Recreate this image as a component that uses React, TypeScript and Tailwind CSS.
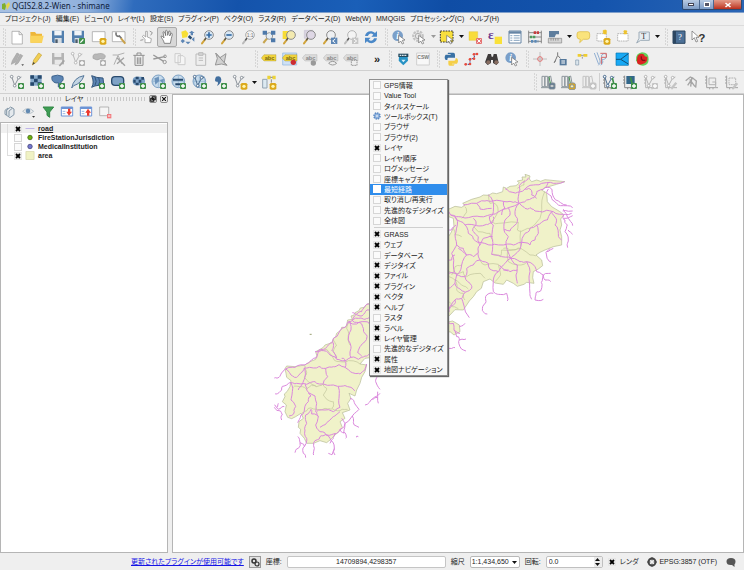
import { type ReactNode } from "react";

const GREEN = "#3f8f4a";
const BLUE = "#5d86b5";
const NAVY = "#27496d";
const GREY = "#a3a3a3";

/* ---------- small pieces shared by the toolbar drawings ---------- */

const Badge = ({ fill = GREEN, children }: { fill?: string; children?: ReactNode }) => (
  <g>
    <rect x="27" y="27" width="18" height="18" rx="3" fill={fill} />
    {children ?? <path d="M36 30v12M30 36h12" stroke="#fff" strokeWidth="4" />}
  </g>
);
const Sun = () => (
  <g>
    <path d="M29 27h14l3 4v12l-3 4H29l-3-4V31z" fill="#dca91c" />
    <circle cx="36" cy="37" r="5" fill="#fff6b0" />
  </g>
);
const Lens = ({ fill = "#d9e8f5", ring = "#8b8b8b", handle = "#d2a43a", children }: { fill?: string; ring?: string; handle?: string; children?: ReactNode }) => (
  <g>
    <path d="M16 30L6 43" stroke={handle} strokeWidth="6" strokeLinecap="round" />
    <path d="M18 27l-5 7" stroke="#555" strokeWidth="4" />
    <circle cx="27" cy="18" r="13" fill={fill} stroke={ring} strokeWidth="3" />
    {children}
  </g>
);
const Nodes = ({ c = "#8a9199" }: { c?: string }) => (
  <g fill="#fff" stroke={c} strokeWidth="3">
    <path d="M8 8l9 26L29 12l8-3" fill="none" />
    <circle cx="8" cy="8" r="4" />
    <circle cx="17" cy="35" r="4" />
    <circle cx="29" cy="11" r="4" />
  </g>
);
const Label = ({ c = "#f1d43e", t = "#7a6a10", children }: { c?: string; t?: string; children?: ReactNode }) => (
  <g>
    <path d="M1 21l8-10h36v19H9z" fill={c} stroke={t} strokeOpacity=".4" strokeWidth="2" />
    <text x="11" y="26" fontSize="17" fontWeight="bold" fontFamily="Liberation Sans, sans-serif" fill={t}>abc</text>
    {children}
  </g>
);
const Globe = ({ children }: { children?: ReactNode }) => (
  <g>
    <circle cx="22" cy="22" r="19" fill="#c7dbec" stroke="#7ea1c4" strokeWidth="3" />
    <path d="M22 3v38M3 22h38M10 7c-7 12-5 24 1 31M34 7c7 12 5 24-1 31" fill="none" stroke="#8eb0d0" strokeWidth="2" />
    {children}
  </g>
);
const Books = ({ c = "#8d969c", children }: { c?: string; children?: ReactNode }) => (
  <g fill="#eee" stroke={c} strokeWidth="3">
    <path d="M6 7h8v31H6zM15 7h8v31h-8z" />
    <path d="M25 9l7-3 6 32H26zM3 41h25" />
    {children}
  </g>
);

const icons: Record<string, ReactNode> = {
  "New project": <path d="M9 7h22l9 9v29H9zM30 7v10h10" fill="#fff" stroke="#979797" strokeWidth="2" />,
  "Open project": <><path d="M4 9h14l4 5h17v27H5z" fill="#eeb73a" /><path d="M4 41V20h40l-5 21z" fill="#fad45c" /></>,
  "Save project": <Floppy />,
  "Save project as": <Floppy><Badge><path d="M31 41l9-10" stroke="#fff" strokeWidth="4" /></Badge></Floppy>,
  "New composer": <><path d="M4 8h38v30H4z" fill="#fff" stroke="#999" strokeWidth="2" /><Sun /></>,
  "Composer manager": <><path d="M4 8h38v30H4z" fill="#fff" stroke="#999" strokeWidth="2" /><path d="M16 10c-4 8 2 14 9 11l7 8" fill="none" stroke="#777" strokeWidth="5" /><path d="M30 28l13 16" stroke="#c9a14a" strokeWidth="6" /></>,
  "Touch zoom": <><path d="M18 41V31l-8-9 4-3 6 5V7h5v17l12 5-2 12z" fill="#fff" stroke="#888" strokeWidth="2" /><path d="M32 6l8 5-5 8M4 34l9-2" fill="none" stroke="#999" strokeWidth="3" /></>,
  "Pan map": <path d="M16 43c-2-10-9-16-10-21 4-3 7 3 9 5L12 9c4-3 6 2 8 11V5c4-3 6 1 6 14l4-13c5-1 4 4 2 15l5-9c5 1 2 8 0 16l-3 15z" fill="#fff" stroke="#555" strokeWidth="2" />,
  "Pan to selection": <><path d="M4 8l13-4 8 9-4 12-14 2z" fill="#f8df36" /><path d="M35 5l-8 7h5v7h7v-7h5zM8 30l7 6-7 7-6-7zM43 24v14l-8-7zM24 46l-8-8h16z" fill={BLUE} /><path d="M26 21l8 8" stroke={NAVY} strokeWidth="8" /></>,
  "Zoom in": <Lens><path d="M27 10v16M19 18h16" stroke="#356ba3" strokeWidth="5" /></Lens>,
  "Zoom out": <Lens><path d="M19 18h16" stroke="#356ba3" strokeWidth="5" /></Lens>,
  "Zoom native": <Lens fill="#f2f2f2" ring="#aaa" handle="#bbb"><text x="17" y="24" fontSize="15" fontFamily="Liberation Sans, sans-serif" fill="#777">1:1</text></Lens>,
  "Zoom full": <><path d="M7 42L20 26" stroke="#c7a550" strokeWidth="6" /><circle cx="25" cy="21" r="10" fill="#e3edf5" stroke="#999" strokeWidth="3" /><path d="M5 5h13v12H5zM30 5h13v12H30zM30 28h13v12H30z" fill="#4d79aa" /></>,
  "Zoom to selection": <><path d="M2 6h26v24H2z" fill="#f7dc35" /><Lens fill="#f3eab0" /></>,
  "Zoom to layer": <><path d="M7 4h26v24H7z" fill="#d7d2df" stroke="#b6adc1" /><Lens fill="#ded7e5" /></>,
  "Zoom last": <><Lens fill="#eef0f2" /><path d="M27 26h19v19H27z" fill={BLUE} /><path d="M40 30l-8 6 8 6" stroke="#fff" strokeWidth="3" fill="none" /></>,
  "Zoom next": <><Lens fill="#f4f4f4" ring="#b5b5b5" handle="#bbb" /><path d="M27 26h19v19H27z" fill="#c6c6c6" /><path d="M33 30l8 6-8 6" stroke="#fff" strokeWidth="3" fill="none" /></>,
  "Refresh": <path d="M6 21C8 6 26 2 36 12l6-6v17H25l6-6c-6-6-14-3-16 4zM42 28C40 43 22 47 12 37l-6 6V26h17l-6 6c6 6 14 3 16-4z" fill="#4a88c8" />,
  "Identify": <><circle cx="20" cy="20" r="16" fill="#7a9fc9" /><text x="16" y="30" fontSize="28" fontStyle="italic" fontWeight="bold" fontFamily="Liberation Serif, serif" fill="#fff">i</text><Arrow /></>,
  "Run feature action": <><circle cx="21" cy="21" r="14" fill="none" stroke="#c2c2c2" strokeWidth="7" strokeDasharray="7 3" /><circle cx="21" cy="21" r="8" fill="#e6e6e6" stroke="#b0b0b0" strokeWidth="3" /><Arrow /></>,
  "Select features": <><path d="M4 6h38v33H4z" fill="#f8df3d" stroke="#333" strokeWidth="3" strokeDasharray="5 3" /><Arrow /></>,
  "Deselect all": <><path d="M6 8h26v26H6z" fill="#f8dc3c" stroke="#d9bd2a" /><Badge fill="#e57373"><path d="M31 31l10 10M41 31L31 41" stroke="#fff" strokeWidth="3" /></Badge></>,
  "Select by expression": <><text x="3" y="30" fontSize="40" fontWeight="bold" fontFamily="Liberation Serif, serif" fill="#6b3c91">ε</text><path d="M23 23h22v22H23z" fill="#f9e13a" /></>,
  "Attribute table": <><path d="M6 6h36v36H6z" fill="#fff" stroke="#6685a5" strokeWidth="3" /><path d="M6 7h36v7H6z" fill="#6685a5" /><path d="M10 20h6M10 27h6M10 34h6M20 20h18M20 27h18M20 34h18" stroke="#87a4c0" strokeWidth="3" /></>,
  "Field calculator": <><path d="M5 5v38M43 5v38M4 11h40M4 24h40M4 37h40" stroke="#8a8a8a" strokeWidth="3" /><path d="M20 11h18" stroke="#c33d3d" strokeWidth="8" strokeDasharray="7 2" /><path d="M9 24h18" stroke="#4e9a5c" strokeWidth="8" strokeDasharray="7 2" /><path d="M12 37h22" stroke="#5a89b8" strokeWidth="8" strokeDasharray="7 3" /></>,
  "Measure": <><path d="M6 6h30v10h-9l-4 9H6z" fill="#5d7d9d" /><path d="M4 28h40v14H4z" fill="#d5d5d5" stroke="#888" strokeWidth="2" /><path d="M12 28v7M19 28v7M26 28v7M33 28v7" stroke="#777" strokeWidth="2" /></>,
  "Map tips": <path d="M14 8h24q6 0 6 7v9q0 7-7 7H25L14 41l2-10q-10-1-10-8v-8q0-7 8-7z" fill="#fae37c" stroke="#d9b73b" strokeWidth="2" />,
  "New bookmark": <><path d="M6 14h28v22H6z" fill="#fff" stroke="#999" strokeWidth="2" strokeDasharray="5 2" /><path d="M25 4l9 10M34 4l-9 10" stroke="#edc22e" strokeWidth="7" /><Sun /></>,
  "Show bookmarks": <><path d="M8 14h31v22H8z" fill="#fff" stroke="#999" strokeWidth="2" strokeDasharray="5 2" /><path d="M27 5l8 10M35 5l-8 10" stroke="#edc22e" strokeWidth="6" /></>,
  "Text annotation": <><path d="M12 9h31v25H17L5 42l7-14z" fill="#e6edf3" stroke="#9eacb8" strokeWidth="3" /><text x="19" y="30" fontSize="24" fontFamily="Liberation Serif, serif" fill="#333">T</text></>,
  "Help contents": <><path d="M6 6h36v37H6z" fill="#4c7097" stroke="#2c4661" strokeWidth="3" /><path d="M6 6h9v37H6z" fill="#2c4661" /><text x="21" y="33" fontSize="26" fontFamily="Liberation Serif, serif" fill="#fff">?</text></>,
  "What's this": <><path d="M3 6v27l7-7 5 13 5-2-5-12h9z" fill="#fff" stroke="#666" strokeWidth="2" /><text x="22" y="38" fontSize="35" fontWeight="bold" fontFamily="Liberation Sans, sans-serif" fill="#333">?</text></>,

  "Current edits": <><path d="M7 40l3-11L24 6l7 4-13 24zM18 42l3-10L34 10l7 4-14 23z" fill="#b0b0b0" stroke="#a0a0a0" strokeWidth="2" /><path d="M37 40h8l-4 5z" fill="#555" /></>,
  "Toggle editing": <><path d="M10 42l4-15L29 6l9 6-15 21z" fill="#f1cf53" stroke="#c4a23c" strokeWidth="2" /><path d="M10 42l3-9 5 4z" fill="#444" /></>,
  "Save layer edits": <><path d="M6 6h36v34H6z" fill="#b4b4b4" /><path d="M13 6h21v12H13zM14 26h22v14H14z" fill="#e9e9e9" /><path d="M28 45l15-17" stroke="#a5a5a5" strokeWidth="5" /></>,
  "Add feature": <><Nodes c="#b8b8b8" /><Badge fill="#b2b2b2" /></>,
  "Move feature": <><path d="M6 22Q4 7 18 9q17-5 25 5-1 15-15 9-9 8-22-1z" fill="#b8b8b8" stroke="#a0a0a0" strokeWidth="2" /><Badge fill="#b2b2b2" /></>,
  "Node tool": <><path d="M5 12h15M9 41l12-28 12 26M20 12l20-6" fill="none" stroke="#b0b0b0" strokeWidth="3" /><path d="M18 20l24 24M39 20L18 38" stroke="#a0a0a0" strokeWidth="4" /></>,
  "Delete selected": <path d="M7 13h34M18 12V6h12v6M12 14v29h24V14M19 19v20M24 19v20M29 19v20" fill="none" stroke="#8e8e8e" strokeWidth="3" />,
  "Cut": <><path d="M4 12l31 19M4 24l34-7" stroke="#999" strokeWidth="4" /><circle cx="38" cy="33" r="5" fill="none" stroke="#999" strokeWidth="3" /><circle cx="39" cy="16" r="4" fill="none" stroke="#999" strokeWidth="3" /></>,
  "Copy": <path d="M9 8h16v27H9zM18 14h15l6 6v21H18z" fill="#f5f5f5" stroke="#ccc" strokeWidth="3" />,
  "Paste": <path d="M9 9h29v34H9zM17 5h13v8H17zM17 21h13M17 28h13" fill="#eee" stroke="#bbb" strokeWidth="3" />,
  "Digitize shape": <path d="M8 6l13 14L39 8l-5 26 8 9-16-4L7 42l6-20zM10 8l30 34" fill="#d2d2d2" stroke="#979797" strokeWidth="3" />,
  "Label settings": <Label />,
  "Pin labels": <><path d="M2 6h42v36H2z" fill="#cfe1f5" stroke="#8bb3df" strokeWidth="2" /><Label><circle cx="34" cy="34" r="8" fill="#cd2c30" /></Label></>,
  "Show labels": <Label c="#dcdcdc" t="#888"><circle cx="34" cy="36" r="8" fill="#999" /></Label>,
  "Move label": <Label c="#dcdcdc" t="#888"><path d="M17 37q12-12 24 0-12 10-24 0z" fill="#eee" stroke="#999" strokeWidth="3" /></Label>,
  "Change label": <Label c="#dcdcdc" t="#888"><path d="M25 28h17v15H25z" fill="#eee" stroke="#999" strokeWidth="3" strokeDasharray="5 2" /></Label>,
  "Catalog": <><path d="M12 17h26l1 12-14 14-14-14z" fill="#2792c4" /><path d="M10 8h30v10H10z" fill="#24485c" /><path d="M14 13h22" stroke="#dbe7ed" strokeWidth="4" strokeDasharray="5 2" /><path d="M19 26l6 8 7-8z" fill="#d9eff8" /></>,
  "Catalog service": <><path d="M5 6h38v36H5z" fill="#f8f8f8" stroke="#d0d0d0" strokeWidth="3" /><text x="7" y="25" fontSize="15" fontWeight="bold" fontFamily="Liberation Sans, sans-serif" fill="#777">CSW</text></>,
  "Python console": <><path d="M15 5h16q5 0 5 6v9H16q-3 0-3 7h-5q-6-8 0-16h15V9h-9z" fill="#3971a5" /><path d="M32 44H20q-4 0-4-6v-9h18q4 0 4-7h4q6 8 0 16H27v2h8z" fill="#f5cf48" /></>,
  "Shortest path": <><path d="M8 40h13V23h13V9h9" fill="none" stroke="#2c3f99" strokeWidth="3" strokeDasharray="4 2" /><g fill="#e84b3c"><circle cx="8" cy="40" r="4" /><circle cx="21" cy="39" r="4" /><circle cx="21" cy="25" r="4" /><circle cx="33" cy="23" r="4" /><circle cx="33" cy="10" r="4" /><circle cx="42" cy="9" r="4" /></g></>,
  "Search": <><path d="M12 9h9l2 8h4l2-8h9l6 26-7 7-10-6v-9h-6v9l-10 6-8-8z" fill="#3e3b3b" /><circle cx="13" cy="34" r="6" fill="#876d61" /><circle cx="37" cy="34" r="6" fill="#876d61" /></>,
  "Coordinate capture": <><path d="M24 3v42M3 24h42" stroke="#aaa" strokeWidth="2" /><circle cx="24" cy="24" r="7" fill="none" stroke="#e07070" strokeWidth="3" /></>,
  "Evaluate": <><path d="M8 33l9-20 8 9M17 12V4M6 36l5-8" stroke="#777" strokeWidth="3" fill="none" /><path d="M23 24h21v19H23z" fill="#55789b" /><path d="M28 30h11M28 36h11" stroke="#fff" strokeWidth="3" /></>,
  "GPS tools": <><path d="M14 9h11v8H14zM31 9h12v8H31z" fill="#efcd30" /><path d="M24 13h8M28 17v6" stroke="#999" strokeWidth="3" /><path d="M8 27h9v15H8z" fill="#dce6ed" stroke="#8399ac" strokeWidth="2" /></>,
  "Topology": <><path d="M4 6l13 34M12 4c8 23 14 30 4 39M26 42V12q12-10 15 3-2 13-17 10 12 7-1 17" fill="none" stroke="#91afd2" strokeWidth="3" /><path d="M22 7h18v12H25v20" fill="none" stroke="#d66969" strokeWidth="3" /></>,
  "Road graph": <><path d="M6 6h37v37H6z" fill="#17a9f5" stroke="#0876b0" strokeWidth="2" /><path d="M6 25h14L43 8M20 25l23 14" stroke="#105078" strokeWidth="3" fill="none" /></>,
  "Heatmap": <><path d="M24 4q20 0 20 20 0 18-16 20-16 1-22-16Q4 7 24 4z" fill="#65cf5a" /><path d="M22 8q10 0 10 8l8 2q2 18-16 22T9 24q0-15 13-16z" fill="#dc2222" /><path d="M22 16q-2 14 12 12" fill="none" stroke="#801414" strokeWidth="4" /></>,

  "Add vector layer": <><Nodes /><Badge /></>,
  "Add raster layer": <><path d="M4 4h34v31H4z" fill="#86aacb" /><path d="M4 4h11v10H4zM26 4h12v10H26zM15 14h11v11H15zM4 25h11v10H4zM26 25h12v10H26z" fill={NAVY} /><Badge /></>,
  "Add PostGIS layer": <><path d="M6 7q17-7 32 0 5 13-5 17v15h-8V26q-5 2-10 0Q3 21 6 7z" fill={BLUE} stroke="#3e648e" strokeWidth="3" /><Badge /></>,
  "Add SpatiaLite layer": <><path d="M5 42Q11 10 42 5q-8 23-31 30z" fill="#c5d6e4" stroke="#55779a" strokeWidth="3" /><Badge /></>,
  "Add MSSQL layer": <><path d="M5 5q14 7 34 7l3 27Q25 29 5 40q9-14 0-35zM15 9q7 14 0 25M26 11q6 13 0 22" fill={BLUE} stroke="#34567b" strokeWidth="3" /><Badge /></>,
  "Add Oracle layer": <><rect x="5" y="8" width="36" height="26" rx="10" fill="#7fa2c6" stroke={NAVY} strokeWidth="4" /><Badge /></>,
  "Add Oracle raster": <><rect x="5" y="8" width="37" height="26" rx="12" fill="#7ea3c8" /><path d="M14 8h9v8h-9zM31 9h8v8h-8zM23 17h8v9h-8zM7 17h7v9H7zM14 26h9v8h-9z" fill={NAVY} /><Badge /></>,
  "Add WMS layer": <><Globe><path d="M10 13l13-5 2 12-12 12zM26 18l13-4-3 15z" fill="#6c93bb" /></Globe><Badge /></>,
  "Add WCS layer": <><Globe><path d="M6 14h30v6H6zM13 28h26v6H13z" fill={NAVY} /></Globe><Badge /></>,
  "Add WFS layer": <><Globe><Nodes c="#486b8f" /></Globe><Badge /></>,
  "Add delimited text": <><path d="M12 8q14-5 16 9-1 12-13 19 5-9 2-13-13 2-5-15z" fill="#426f9f" /><Badge /></>,
  "New shapefile": <><Nodes /><Sun /></>,
  "Add GPS layer": <><path d="M5 16h13v26H5z" fill="#ddeaf2" stroke="#93a4b2" strokeWidth="3" /><path d="M19 5h10v11H19zM34 5h10v11H34z" fill="#ecd338" /><path d="M28 10h7M31 16v10" stroke="#888" strokeWidth="3" /><Sun /></>,
  "Open mapset": <Books><Badge fill="#55738e"><path d="M31 33h10v6H31z" fill="#fff" /></Badge><path d="M27 8l4 20" stroke={GREEN} /></Books>,
  "New mapset": <Books><path d="M27 8l4 20" stroke={GREEN} /><Sun /></Books>,
  "Close mapset": <Books c="#c4c4c4"><Badge fill="#c4c4c4" /></Books>,
  "Add GRASS vector": <><Frame c="#888" /><Nodes c="#486b8f" /><path d="M31 12l5 20" stroke={GREEN} strokeWidth="5" /><Badge /></>,
  "Add GRASS raster": <><Frame c="#888" /><path d="M13 6h25v24H13z" fill="#33678a" /><path d="M25 10l6 20" stroke={GREEN} strokeWidth="5" /><Badge /></>,
  "Create GRASS vector": <><Frame c="#b3b3b3" /><Nodes c="#b3b3b3" /><Badge fill="#c4c4c4" /></>,
  "Edit GRASS vector": <><Frame c="#b3b3b3" /><Nodes c="#b3b3b3" /><path d="M26 43l14-17" stroke="#c4c4c4" strokeWidth="7" /></>,
  "GRASS tools": <path d="M8 20l14-11 8 4 10 8-2 20M14 34L30 10M20 16l16 22M26 12l-3 26" fill="none" stroke="#a5a5a5" strokeWidth="4" />,
  "Show region": <><Frame c={GREY} /><path d="M15 12h20v20H15zM25 24h10v18" fill="none" stroke="#b3b3b3" strokeWidth="3" /></>,
  "Edit region": <><Frame c={GREY} /><path d="M15 12h20v20H15z" fill="none" stroke="#b3b3b3" strokeWidth="3" strokeDasharray="5 2" /><path d="M27 43l13-15" stroke="#c4c4c4" strokeWidth="7" /></>,

  "Add group": <path d="M14 34V18l12-9 10 6v17l-12 9zM21 36V21l10-8M14 34l-5-3V19l9-7" fill="#e4e9ed" stroke="#8598a8" strokeWidth="3" />,
  "Manage visibility": <><path d="M5 22q16-17 33 0-16 14-33 0z" fill="#eee" stroke="#b5c1ca" strokeWidth="3" /><circle cx="21" cy="21" r="7" fill="#628ab2" /><path d="M33 36h9l-4 5z" fill="#333" /></>,
  "Filter legend": <path d="M9 9h32L29 24v16l-8-6V24z" fill="#3e9e54" stroke="#328746" strokeWidth="3" />,
  "Expand all": <><path d="M7 9h34v27H7z" fill="#fff" stroke="#6c94d6" strokeWidth="3" /><path d="M7 9h34v6H7z" fill="#6c94d6" /><path d="M11 22h8M11 29h8" stroke="#9bb6e4" strokeWidth="3" /><path d="M34 14v9h5l-9 12-8-12h5v-9z" fill="#ec392e" /></>,
  "Collapse all": <><path d="M7 9h34v27H7z" fill="#fff" stroke="#6c94d6" strokeWidth="3" /><path d="M7 9h34v6H7z" fill="#6c94d6" /><path d="M11 22h8M11 29h8" stroke="#9bb6e4" strokeWidth="3" /><path d="M27 35v-9h-5l8-12 9 12h-5v9z" fill="#ec392e" /></>,
  "Remove layer": <><path d="M8 9h27v26H8z" fill="#f5f5f5" stroke="#999" strokeWidth="2" /><path d="M30 30h13v13H30z" fill="#f2797d" /><path d="M33 36h7" stroke="#fff" strokeWidth="3" /></>,
};

function Floppy({ children }: { children?: ReactNode }) {
  return (
    <g>
      <path d="M6 5h36v37H10l-4-4z" fill="#527fae" />
      <path d="M13 5h22v14H13z" fill="#f1f4f7" />
      <path d="M14 27h21v15H14z" fill="#d7dde2" />
      <path d="M16 31h7v11h-7z" fill="#4b5b6b" />
      {children}
    </g>
  );
}
function Arrow() {
  return <path d="M23 19v23l6-6 5 9 4-2-4-9 8-1z" fill="#fff" stroke="#666" strokeWidth="2" />;
}
function Frame({ c }: { c: string }) {
  return <path d="M8 5v36h34M8 9H3M8 18H3M8 27H3M17 41v5M27 41v5" fill="none" stroke={c} strokeWidth="3" />;
}

/* ---------- toolbars ---------- */

const Grip = () => (
  <svg viewBox="0 0 7 18" className="h-[18px] w-[7px] shrink-0">
    {[1, 4, 7, 10, 13, 16].map((y) => (
      <path key={y} d={`M3 ${y}h1M5 ${y + 1}h1`} stroke="#bdbdbd" />
    ))}
  </svg>
);

function Tool({ name, pressed }: { name: string; pressed?: boolean }) {
  return (
    <button
      aria-label={name}
      className={`grid h-5 min-w-4 basis-5 place-items-center rounded-xs ${pressed ? "border border-[#a9a9a9] bg-[#d8d8d8]" : ""}`}
    >
      <svg viewBox="0 0 48 48" className="h-4 w-4">{icons[name]}</svg>
    </button>
  );
}

function Drop({ faint }: { faint?: boolean }) {
  return (
    <button aria-label="More" className="grid h-5 w-2 shrink-0 place-items-center">
      <svg viewBox="0 0 5 3" className="h-[3px] w-[5px]"><path d="M0 0h5L2.500 3z" fill={faint ? "#999" : "#111"} /></svg>
    </button>
  );
}

function Bar({ items, width = "" }: { items: string[]; width?: string }) {
  return (
    <div role="toolbar" className="flex shrink-0 items-center">
      <Grip />
      <div className={`flex items-center justify-between ${width}`}>
        {items.map((n, i) =>
          n === "v" ? <Drop key={i} /> : n === "w" ? <Drop key={i} faint /> : n === "|" ? (
            <span key={i} className="h-[18px] w-px bg-[#cfcfcf]" />
          ) : (
            <Tool key={i} name={n} pressed={n === "Pan map"} />
          ),
        )}
      </div>
    </div>
  );
}

/* ---------- controls ---------- */

function Tick({ id, on, blank }: { id: string; on?: boolean; blank?: boolean }) {
  return (
    <span className="grid h-2 w-2 shrink-0 place-items-center">
      <input
        id={id}
        type="checkbox"
        defaultChecked={on}
        className={`peer h-2 w-2 appearance-none border [grid-area:1/1] ${blank ? "border-white bg-white" : "border-[#d6d6d6] bg-[#fbfbfb] checked:border-[#e6e6e6] checked:bg-[#ececec]"}`}
      />
      <svg viewBox="0 0 6 6" className="pointer-events-none hidden h-[6px] w-[6px] [grid-area:1/1] peer-checked:block">
        <path d="M1 1l4 4M5 1L1 5" stroke="#000" strokeWidth="1.800" />
      </svg>
    </span>
  );
}

type Entry = [string, boolean?];
const panels: Entry[] = [
  ["GPS情報"], ["Value Tool"], ["タイルスケール"], ["ツールボックス(T)"], ["ブラウザ"], ["ブラウザ(2)"], ["レイヤ", true],
  ["レイヤ順序"], ["ログメッセージ"], ["座標キャプチャ"], ["最短経路"], ["取り消し/再実行"], ["先進的なデジタイズ"], ["全体図"],
];
const bars: Entry[] = [
  ["GRASS", true], ["ウェブ", true], ["データベース"], ["デジタイズ", true], ["ファイル", true], ["プラグイン", true], ["ベクタ", true],
  ["ヘルプ", true], ["ラスタ"], ["ラベル", true], ["レイヤ管理", true], ["先進的なデジタイズ"], ["属性", true], ["地図ナビゲーション", true],
];

function Entries({ list, prefix }: { list: Entry[]; prefix: string }) {
  return (
    <div className="flex h-[146px] flex-col">
      {list.map(([text, on], i) => {
        const hot = text === "最短経路";
        const id = `${prefix}-${i}`;
        const row = `flex flex-1 items-center gap-[3px] pl-[3px] ${hot ? "bg-[#2f8dec] text-white" : ""}`;
        return text.startsWith("ツール") ? (
          <button key={id} className={row}>
            <svg viewBox="0 0 8 8" className="h-2 w-2 shrink-0">
              <circle cx="4" cy="4" r="3" fill="#8db0dc" stroke="#5c8ac4" strokeWidth="1.500" strokeDasharray="1.500 .8" />
              <circle cx="4" cy="4" r="1" fill="#d9e6f5" />
            </svg>
            <span className="leading-[9px] whitespace-nowrap">{text}</span>
          </button>
        ) : (
          <div key={id} className={row}>
            <Tick id={id} on={on} blank={hot} />
            <label htmlFor={id} className="leading-[9px] whitespace-nowrap">{text}</label>
          </div>
        );
      })}
    </div>
  );
}

function PanelMenu() {
  return (
    <div role="menu" className="absolute top-[79px] left-[369px] w-[79px] border border-[#8f8f8f] bg-[#f7f7f7] shadow-[1px_1px_1px_#666]">
      <Entries list={panels} prefix="panel" />
      <hr className="mx-1 my-px border-[#cfcfcf]" />
      <Entries list={bars} prefix="bar" />
    </div>
  );
}

/* ---------- map ---------- */

const westRoads = [
  "M313 42L298 52 290 65 275 72 262 92 248 98 240 112 222 128 210 142 203 158 190 165 175 178 160 185 155 203 135 214 120 225 90 232 62 237",
  "M62 237L50 248 42 262 28 264", "M62 237L78 255 95 262 108 248 118 234",
  "M118 234L145 234 165 230 182 235 205 230 222 224 240 232 262 248 285 252 300 240 305 222",
  "M118 234L120 262 110 285 100 300", "M30 310L42 308 50 294 65 285 78 278 95 280 125 283 150 275 175 282 205 285 235 288 258 292 270 302",
  "M78 278L82 305 78 330 92 350 88 365 72 378", "M98 398L108 375 118 360 130 335 138 318 125 300 120 282",
  "M28 345L35 352 45 356 58 350", "M28 352L42 362 52 375 50 390", "M35 352L40 340",
  "M130 310L150 318 155 340 152 365 160 380 152 405 165 425 182 434 205 432 225 418 240 400 262 378 282 358 268 338 255 325",
  "M155 365L180 360 205 365 225 352 222 325 220 290", "M165 412L185 398 205 380 225 365",
  "M182 434L165 440 150 452 148 475 146 495", "M182 434L198 452 208 475 202 492 190 490", "M208 475L210 495",
  "M225 418L240 428 242 445", "M240 400L230 385", "M262 378L265 398 282 412", "M240 400L236 430",
  "M98 440L105 458 100 475 90 488", "M105 458L118 470 115 490 122 503",
  "M120 420L125 400 122 375 138 358", "M120 420L125 445 118 470",
  "M150 185L175 182 195 195 215 208 240 212 258 202 280 208 300 198 313 192",
  "M255 95L258 120 250 150 258 175 258 202", "M262 92L285 98 295 115 305 135 300 155 285 170 278 188 290 198",
  "M262 92L280 85 300 88 313 82", "M248 98L275 102 300 95 313 102", "M262 68L285 78 300 68 313 60",
  "M205 158L200 180 215 205", "M240 232L240 214 230 205", "M182 235L188 260 175 280", "M300 345L318 330 345 310", "M338 305L340 340", "M322 328L338 322",
  "M340 258L332 275 345 298", "M275 442L280 440", "M160 380L140 372 138 358", "M210 430L205 445 195 460",
];
const eastRoads = [
  "M50 132L62 150 85 155 115 158 150 155 185 148 210 138 235 128 268 115",
  "M100 120L140 115 165 108 188 108 225 110 250 112 268 115", "M268 115L265 95 270 75 268 62 285 50 295 38",
  "M225 70L238 80 262 82 285 72 310 60 335 55 370 55 403 50", "M268 115L285 130 300 128 315 138 345 138 370 140 400 148 425 145",
  "M268 115L290 105 312 98 320 80 345 68 355 52", "M355 72L352 85 365 100 380 115 400 122 428 128", "M345 68L365 72 368 90 385 108 410 120",
  "M400 132L408 145 415 160 428 182", "M400 150L405 165 412 180 405 200 415 228 413 248", "M415 195L428 208", "M402 160L428 152", "M398 138L428 138",
  "M365 140L352 165 335 172 318 182 300 190 285 205 275 232 250 240 220 240 185 240 150 232 130 222 115 205 105 180 80 165 62 150",
  "M75 155L82 180 75 210 80 240 65 265 70 300 80 330 75 355 55 370", "M365 140L378 160 375 180 385 205 395 225",
  "M130 160L138 180 128 198 145 215 150 240 145 262 130 275 110 270 85 250", "M105 180L140 182 170 178 188 172 190 155",
  "M175 90L188 108 190 140 178 155 190 180 185 215 188 245 185 268 215 275 242 280 262 262 275 232",
  "M235 128L240 150 225 165 222 195 235 215 228 238 242 280", "M268 115L255 140 262 160 255 180 240 198 222 195",
  "M320 180L325 205 315 225 300 240 275 232", "M188 215L160 220 150 240", "M80 240L100 250 110 270 95 300 80 330",
  "M145 262L150 285 130 300 110 310 105 335 80 330", "M150 285L175 295 185 315 205 320 220 300 242 280", "M205 320L190 345 190 380 205 388 230 385 232 408", "M190 385L170 390 168 410 158 425 160 440 172 447",
  "M242 280L270 290 290 290 315 305 320 320 340 330 362 325", "M340 330L345 345 362 350", "M340 330L334 352 332 378 318 384 315 405 340 403",
  "M242 280L262 300 258 330 262 355", "M290 290L300 320 298 352 300 385 305 403",
  "M105 335L120 355 125 370 105 382 95 400 75 405 60 425 52 440", "M95 400L105 435 118 458", "M75 405L70 420 55 430", "M75 355L90 372 105 382",
  "M360 250L348 262 355 285 362 292", "M370 250L350 260", "M50 290L65 285 75 270", "M220 315L240 320 262 315", "M208 300L235 318",
  "M52 470L70 475 72 495 80 515 88 525 108 522", "M88 525L90 545 108 558", "M88 485L105 475", "M55 550L75 548", "M72 495L90 505", "M52 425L58 440",
  "M222 110L225 130 215 150", "M140 115L150 132 185 130", "M80 325L55 325", "M50 205L65 195 78 180", "M320 100L305 90 300 72 285 72",
];
const westBounds = [
  "M155 185L185 178 205 205 225 215 250 212 285 222", "M85 292L105 290 125 298 140 285 155 290 175 280 185 295 175 315 185 328 205 335 200 355 225 362 248 358",
  "M110 370L130 355 155 358 180 355 200 360", "M120 228L125 248 118 262 130 275 155 290", "M205 150L215 165 205 185 215 205", "M255 95L245 115 250 135 255 165",
];
const eastBounds = [
  "M175 88L180 115 200 120 202 145 185 170 205 175 265 172 262 195 272 198 272 250 215 255 212 275 185 268", "M220 250L240 255 262 250 272 250 300 270 320 270",
  "M130 185L145 200 180 205 190 225", "M105 125L108 145 95 160", "M345 78L335 120 330 160 300 190 272 200", "M50 320L75 325 100 320 110 335 150 325 165 340",
  "M70 190L75 210 95 215", "M150 285L165 300 205 298 212 330 195 350", "M50 335L75 345 95 360 115 372", "M75 345L80 375 100 385 105 405", "M95 300L75 305 65 330", "M235 255L235 290 262 300 290 292",
  "M285 45L282 60 262 70", "M50 405L65 425 85 430",
];

function wander(d: string, amount = 3) {
  const n = (d.match(/[\d.]+/g) ?? []).map(Number);
  const out: string[] = [`M${n[0]} ${n[1]}`];
  for (let i = 2; i < n.length; i += 2) {
    const [x0, y0, x1, y1] = [n[i - 2], n[i - 1], n[i], n[i + 1]];
    for (const t of [0.33, 0.67]) {
      const s = Math.sin(x0 * 12.9 + y1 * 78.2 + t * 37.7) * amount;
      const c = Math.cos(x1 * 4.1 + y0 * 9.3 + t * 53.1) * amount;
      out.push(`L${(x0 + (x1 - x0) * t + s).toFixed(1)} ${(y0 + (y1 - y0) * t + c).toFixed(1)}`);
    }
    out.push(`L${x1} ${y1}`);
  }
  return out.join("");
}

function MapView() {
  const road = { fill: "none", stroke: "#da88dc", strokeWidth: 3, strokeLinejoin: "round" as const };
  const bound = { fill: "none", stroke: "#bfc39a", strokeWidth: 2 };
  const land = { fill: "#f0f2c9", stroke: "#b4b894", strokeWidth: 2 };
  return (
    <svg viewBox="173 95 570 457" className="h-full w-full" role="img" aria-label="shimane">
      <path d="M368 304L400 275 449 210V316L410 345 368 358z" fill="#f0f2c9" />
      <g transform="translate(265 290) scale(.33333)">
        <path {...land} d="M315 40L306 42 298 52 286 54 282 62 270 68 266 76 258 78 262 88 248 90 245 105 241 112 230 112 228 120 215 130 212 140 205 145 202 155 195 160 180 165 175 172 165 178 152 185 155 196 152 208 135 215 120 225 90 230 65 228 60 236 63 250 65 262 78 272 75 290 66 305 58 312 60 320 52 335 64 345 60 365 68 382 80 386 92 380 108 370 115 385 102 395 100 412 107 418 105 430 118 445 125 460 145 460 165 452 185 458 200 446 210 435 222 425 232 412 225 395 240 385 232 368 255 360 248 340 258 325 252 310 270 318 275 300 285 280 290 262 300 245 305 225 285 222 300 205 315 203" />
        {westBounds.map((d) => <path key={d} d={wander(d)} {...bound} />)}
        {westRoads.map((d) => <path key={d} d={wander(d)} {...road} />)}
        <path d="M134 133h6" stroke="#9aa070" strokeWidth="3" />
      </g>
      <g transform="translate(430 165) scale(.33333)">
        <path {...land} d="M48 135L62 130 75 124 95 127 105 120 98 115 125 103 150 96 160 90 175 91 188 84 200 86 218 80 220 66 230 70 240 64 258 62 268 54 262 48 278 45 276 36 288 36 285 28 300 33 298 42 305 50 320 45 332 49 345 44 375 47 405 50 380 58 345 68 335 75 350 85 352 110 365 125 390 140 402 150 392 162 395 180 390 195 395 215 395 240 370 245 345 255 330 262 318 270 335 285 338 302 325 312 310 320 308 338 312 355 290 352 282 358 262 364 250 355 230 345 220 358 195 354 180 342 160 350 154 370 140 380 130 395 118 408 110 420 100 435 75 434 60 450 48 462V225L62 205 72 185 70 160 48 152z" />
        <path {...land} d="M48 472L68 468 88 480 90 500 72 510 60 500 48 505z" />
        {eastBounds.map((d) => <path key={d} d={wander(d)} {...bound} />)}
        {eastRoads.map((d) => <path key={d} d={wander(d)} {...road} />)}
      </g>
    </svg>
  );
}

/* ---------- layer dock ---------- */

const layers = [
  { name: "road", on: true, mark: <path d="M0 5h10" stroke="#b9aee8" /> },
  { name: "FireStationJurisdiction", on: false, mark: <circle cx="5" cy="5" r="2.500" fill="#6eb30d" stroke="#3c5a18" strokeWidth=".8" /> },
  { name: "MedicalInstitution", on: false, mark: <circle cx="5" cy="5" r="2.500" fill="#7477cf" stroke="#3c3d70" strokeWidth=".8" /> },
  { name: "area", on: true, mark: <path d="M.5.500h9v9h-9z" fill="#f0f2c4" stroke="#dcdcb4" /> },
];

const Dots = () => (
  <span className="h-1 flex-1 bg-[radial-gradient(#c4c4c4_35%,transparent_40%)] bg-size-[3px_2px]" />
);

function LayerDock() {
  return (
    <aside className="flex w-[168px] shrink-0 flex-col">
      <div className="flex h-2.5 items-center gap-[3px] pl-0.5">
        <Dots />
        <h2 className="leading-[10px]">レイヤ</h2>
        <Dots />
        {["M3 1h4v4H3zM1 3h4v4H1z", "M1.500 1.500l5 5M6.500 1.500l-5 5"].map((d, i) => (
          <button key={d} aria-label={i ? "Close" : "Float"} className="grid h-2 w-2 place-items-center rounded-xs border border-[#8b8b8b]">
            <svg viewBox="0 0 8 8" className="h-[6px] w-[6px]"><path d={d} fill="none" stroke="#111" strokeWidth="1.500" /></svg>
          </button>
        ))}
      </div>
      <div className="mb-0.5 flex h-4 w-[114px] items-center">
        {["Add group", "Manage visibility", "Filter legend", "Expand all", "Collapse all", "Remove layer"].map((n) => (
          <Tool key={n} name={n} />
        ))}
      </div>
      <ul className="flex-1 border border-[#b5b5b5] bg-white pt-px">
        {layers.map((l, i) => (
          <li key={l.name} className={`flex h-[9px] items-center ${i === 0 ? "bg-[#f0f0f0]" : ""}`}>
            <span className={`mr-px ml-1.5 w-1.5 border-l border-[#ddd] ${i === 3 ? "h-[5px] self-start border-b" : "h-[9px]"}`} />
            <Tick id={`layer-${i}`} on={l.on} />
            <svg viewBox="0 0 10 10" className="mx-[3px] h-[9px] w-[10px]">{l.mark}</svg>
            <label htmlFor={`layer-${i}`} className={`leading-[9px] font-bold ${i === 0 ? "underline" : ""}`}>{l.name}</label>
          </li>
        ))}
      </ul>
    </aside>
  );
}

/* ---------- status bar ---------- */

function StatusBar() {
  return (
    <footer className="flex h-[17px] shrink-0 items-center gap-[5px] pr-2 pl-[131px] whitespace-nowrap">
      <a href="#plugins" className="text-[#1414e6] underline">更新されたプラグインが使用可能です</a>
      <button aria-label="Toggle extents" className="grid h-3 w-3 shrink-0 place-items-center border border-[#999] bg-[#e2e2e2]">
        <svg viewBox="0 0 10 10" className="h-2.5 w-2.5">
          <circle cx="4" cy="4" r="2" fill="none" stroke="#333" strokeWidth="1.500" />
          <circle cx="7" cy="7" r="2" fill="none" stroke="#333" strokeWidth="1.200" />
        </svg>
      </button>
      <label htmlFor="coord">座標:</label>
      <input id="coord" defaultValue="14709894,4298357" className="h-3 min-w-0 flex-1 rounded-xs border border-[#c5c5c5] bg-white text-center" />
      <label htmlFor="scale">縮尺</label>
      <span className="grid w-[50px] items-center">
        <select id="scale" className="h-3 w-full appearance-none rounded-xs border border-[#b8b8b8] bg-white pl-px [grid-area:1/1]">
          <option>1:1,434,650</option>
        </select>
        <svg viewBox="0 0 9 10" className="pointer-events-none mr-px h-2.5 w-[9px] justify-self-end [grid-area:1/1]">
          <path d="M2 4h5L4.500 7z" fill="#111" />
        </svg>
      </span>
      <label htmlFor="rot">回転:</label>
      <span className="flex h-3 w-[57px] rounded-xs border border-[#c0c0c0] bg-white">
        <input id="rot" defaultValue="0.0" className="min-w-0 flex-1 pl-0.5" />
        <span className="flex w-2 flex-col bg-[#ececec]">
          {["M0 3h5L2.500 0z", "M0 0h5L2.500 3z"].map((d, i) => (
            <button key={d} aria-label={i ? "Decrease" : "Increase"} className="grid flex-1 place-items-center">
              <svg viewBox="0 0 5 3" className="h-[3px] w-[5px]"><path d={d} fill="#111" /></svg>
            </button>
          ))}
        </span>
      </span>
      <span className="flex items-center gap-1">
        <Tick id="render" on />
        <label htmlFor="render">レンダ</label>
      </span>
      <button className="ml-1 flex items-center gap-0.5">
        <svg viewBox="0 0 10 10" className="h-2.5 w-2.5">
          <circle cx="5" cy="5" r="3.500" fill="none" stroke="#444" strokeWidth="2" />
          <path d="M5 0v10M0 5h10" stroke="#444" />
          <circle cx="5" cy="5" r="1.800" fill="#efefef" />
        </svg>
        EPSG:3857 (OTF)
      </button>
      <button aria-label="Messages" className="ml-1">
        <svg viewBox="0 0 10 10" className="h-2.5 w-2.5">
          <path d="M5 1q4.500 0 4.500 3.500 0 2-1 2.800V10L6 8Q.5 8.500.5 4.500.5 1 5 1z" fill="#555" />
        </svg>
      </button>
    </footer>
  );
}

const menus = [
  "プロジェクト(J)", "編集(E)", "ビュー(V)", "レイヤ(L)", "設定(S)", "プラグイン(P)", "ベクタ(O)", "ラスタ(R)",
  "データベース(D)", "Web(W)", "MMQGIS", "プロセッシング(C)", "ヘルプ(H)",
];

export default function App() {
  return (
    <div className="relative flex h-screen flex-col overflow-hidden bg-[#efefef] font-['Liberation_Sans','Noto_Sans_CJK_JP',sans-serif] text-[7px] leading-[10px] text-[#1c1c1c] [font-feature-settings:'palt']">
      <header className="flex h-[13px] shrink-0 items-center border-b border-[#7f9fcb] bg-[linear-gradient(100deg,#a9c1e2_0,#8fb0dc_12%,#2f6cbd_18%,#1453ab_32%,#1a5fb8_48%,#0f4da5_60%,#1454ad_80%,#2a65b5_100%)] pr-0.5 pl-px">
        <svg viewBox="0 0 10 10" className="h-2.5 w-2.5">
          <path d="M1 3l3-1 1 3-1 4-3-1z" fill="#7fae2c" />
          <path d="M5 4l3-3 1 3-3 5z" fill="#e7d64a" />
        </svg>
        <h1 className="ml-px flex-1 font-['Noto_Sans',sans-serif] text-[8px] text-[#10213a]">QGIS2.8.2-Wien - shimane</h1>
        <div className="flex h-[10px] self-start overflow-hidden rounded-b-xs border border-t-0 border-[#2f4a70]">
          <button aria-label="Minimize" className="grid w-4 place-items-center bg-linear-to-b from-[#b9cbe3] to-[#7d9cc6]">
            <span className="h-[3px] w-1.5 border border-[#445] bg-white" />
          </button>
          <button aria-label="Restore" className="grid w-[15px] place-items-center border-x border-[#4c6890] bg-linear-to-b from-[#b9cbe3] to-[#7d9cc6]">
            <span className="h-[5px] w-1.5 border border-white bg-[#556]" />
          </button>
          <button aria-label="Close" className="grid w-[27px] place-items-center bg-linear-to-b from-[#e39a88] to-[#bb2d1b]">
            <svg viewBox="0 0 8 6" className="h-1.5 w-2"><path d="M1.500 1l5 4M6.500 1l-5 4" stroke="#fff" strokeWidth="1.600" /></svg>
          </button>
        </div>
      </header>

      <nav className="flex h-3 shrink-0 items-center gap-[5px] pl-[5px] whitespace-nowrap">
        {menus.map((m) => <button key={m}>{m}</button>)}
      </nav>

      <div className="flex h-[23px] shrink-0 items-center gap-px border-y border-t-[#dcdcdc] border-b-[#d0d0d0]">
        <Bar width="w-[122px]" items={["New project", "Open project", "Save project", "Save project as", "New composer", "Composer manager"]} />
        <Bar width="w-[244px]" items={["Touch zoom", "Pan map", "Pan to selection", "Zoom in", "Zoom out", "Zoom native", "Zoom full", "Zoom to selection", "Zoom to layer", "Zoom last", "Zoom next", "Refresh"]} />
        <Bar width="w-[272px]" items={["Identify", "Run feature action", "w", "Select features", "v", "Deselect all", "Select by expression", "Attribute table", "Field calculator", "Measure", "v", "Map tips", "New bookmark", "Show bookmarks", "Text annotation", "v"]} />
        <Bar width="w-10" items={["Help contents", "What's this"]} />
      </div>

      <div className="flex h-[23px] shrink-0 items-center gap-px border-b border-[#d0d0d0]">
        <Bar width="w-[224px]" items={["Current edits", "Toggle editing", "Save layer edits", "Add feature", "Move feature", "Node tool", "Delete selected", "Cut", "Copy", "Paste", "Digitize shape"]} />
        <div className="ml-5 flex items-center">
          <Bar width="w-[102px]" items={["Label settings", "Pin labels", "Show labels", "Move label", "Change label"]} />
          <button aria-label="Show more" className="ml-2 w-4 text-center text-[11px] font-bold">»</button>
        </div>
        <Bar width="w-10" items={["Catalog", "Catalog service"]} />
        <Bar width="w-[81px]" items={["Python console", "Shortest path", "Search", "Identify"]} />
        <Bar width="w-[122px]" items={["Coordinate capture", "Evaluate", "GPS tools", "Topology", "Road graph", "Heatmap"]} />
      </div>

      <div className="flex h-[23px] shrink-0 items-center justify-between border-b border-[#d0d0d0] pr-0.5">
        <Bar width="w-[272px]" items={["Add vector layer", "Add raster layer", "Add PostGIS layer", "Add SpatiaLite layer", "Add MSSQL layer", "Add Oracle layer", "Add Oracle raster", "Add WMS layer", "Add WCS layer", "Add WFS layer", "Add delimited text", "New shapefile", "v", "Add GPS layer"]} />
        <Bar width="w-[204px]" items={["Open mapset", "New mapset", "Close mapset", "|", "Add GRASS vector", "Add GRASS raster", "Create GRASS vector", "Edit GRASS vector", "GRASS tools", "Show region", "Edit region"]} />
      </div>

      <div className="flex min-h-0 flex-1 gap-1">
        <LayerDock />
        <main className="min-w-0 flex-1 border border-[#b5b5b5] bg-white">
          <MapView />
        </main>
      </div>
      <StatusBar />
      <PanelMenu />
    </div>
  );
}
